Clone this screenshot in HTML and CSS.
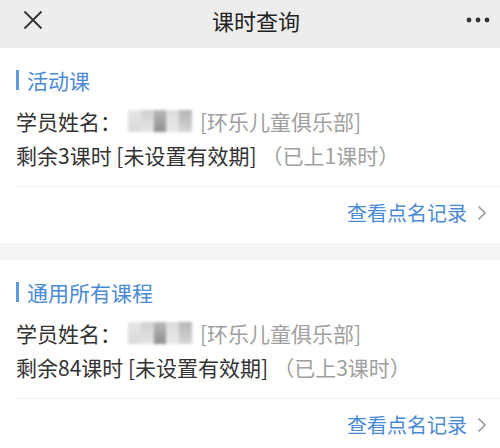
FILE: index.html
```html
<!DOCTYPE html>
<html lang="zh">
<head>
  <meta charset="UTF-8">
  <title>课时查询</title>
  <link rel="stylesheet" href="styles.css">
</head>
<body>
  <header class="topbar">
    <div class="topbar-left">
      <svg class="icon-close" width="20" height="20" viewBox="0 0 20 20">
        <path d="M1.5 1.5 L18.5 18.5 M18.5 1.5 L1.5 18.5" stroke="#333" stroke-width="1.8" fill="none"/>
      </svg>
    </div>
    <h1 class="topbar-title">课时查询</h1>
    <div class="topbar-right">
      <svg width="26" height="6" viewBox="0 0 26 6">
        <circle cx="3" cy="3" r="2.4" fill="#333"/>
        <circle cx="12" cy="3" r="2.4" fill="#333"/>
        <circle cx="21" cy="3" r="2.4" fill="#333"/>
      </svg>
    </div>
  </header>

  <section class="card">
    <h2 class="card-title">活动课</h2>
    <div class="card-info">
      <div class="info-line">
        <span>学员姓名：</span>
        <span class="name-mosaic">
          <i class="m1"></i><i class="m2"></i><i class="m3"></i><i class="m4"></i><i class="m5"></i>
        </span>
        <span class="muted">[环乐儿童俱乐部]</span>
      </div>
      <div class="info-line">
        <span>剩余3课时 [未设置有效期]</span>
        <span class="muted used">（已上1课时）</span>
      </div>
    </div>
    <a class="card-link" href="#">查看点名记录
      <svg class="chevron" width="10" height="16" viewBox="0 0 10 16">
        <path d="M1.5 1.5 L8 8 L1.5 14.5" stroke="#999" stroke-width="1.6" fill="none"/>
      </svg>
    </a>
  </section>

  <section class="card">
    <h2 class="card-title">通用所有课程</h2>
    <div class="card-info">
      <div class="info-line">
        <span>学员姓名：</span>
        <span class="name-mosaic">
          <i class="m1"></i><i class="m2"></i><i class="m3"></i><i class="m4"></i><i class="m5"></i>
        </span>
        <span class="muted">[环乐儿童俱乐部]</span>
      </div>
      <div class="info-line">
        <span>剩余84课时 [未设置有效期]</span>
        <span class="muted used">（已上3课时）</span>
      </div>
    </div>
    <a class="card-link" href="#">查看点名记录
      <svg class="chevron" width="10" height="16" viewBox="0 0 10 16">
        <path d="M1.5 1.5 L8 8 L1.5 14.5" stroke="#999" stroke-width="1.6" fill="none"/>
      </svg>
    </a>
  </section>
</body>
</html>
```

FILE: styles.css
```css
body {
  margin: 0;
  background-color: #f4f4f4;
  font-family: "Noto Sans CJK SC", "Noto Sans", sans-serif;
  color: #333;
}

.topbar {
  display: flex;
  align-items: center;
  height: 40px;
  padding-bottom: 8px;
  background-color: #ededed;
}

.topbar-left {
  width: 64px;
  padding-left: 23px;
  box-sizing: border-box;
  display: flex;
  align-items: center;
}

.topbar-title {
  flex: 1;
  margin: 0;
  text-align: center;
  font-size: 22px;
  font-weight: normal;
  color: #222;
  line-height: 40px;
}

.topbar-right {
  width: 52px;
  display: flex;
  align-items: center;
  justify-content: flex-end;
  padding-right: 8px;
  box-sizing: border-box;
}

.card {
  background: white;
  padding-top: 20px;
  margin-bottom: 17px;
}

.card-title {
  margin: 2px 0 14px 16px;
  padding-left: 8px;
  border-left: 3px solid #5b9be0;
  height: 20px;
  line-height: 20px;
  font-size: 21px;
  font-weight: normal;
  color: #4a8ad6;
}

.card-info {
  margin-left: 16px;
  padding-bottom: 14px;
  border-bottom: 1px solid #efefef;
}

.info-line {
  display: flex;
  align-items: center;
  height: 34px;
  font-size: 21px;
  white-space: nowrap;
}

.muted {
  color: #a0a0a0;
}

.used {
  margin-left: 5px;
}

.name-mosaic {
  display: flex;
  width: 64px;
  height: 22px;
  margin: 0 8px 0 7px;
  filter: blur(1.5px);
}

.name-mosaic i {
  flex: 1;
  height: 100%;
}

.m1 { background: linear-gradient(#e6e6e6, #d8d8d8); }
.m2 { background: linear-gradient(#d0d0d0, #e4e4e4); }
.m3 { background: linear-gradient(#b8b8b8, #8f8f8f); }
.m4 { background: linear-gradient(#dcdcdc, #e8e8e8); }
.m5 { background: linear-gradient(#b4b4b4, #d6d6d6); }

.card-link {
  display: flex;
  justify-content: flex-end;
  align-items: center;
  gap: 10px;
  padding: 14px 13px 18px 0;
  line-height: 24px;
  font-size: 20px;
  color: #4a8ad6;
  text-decoration: none;
}
```
